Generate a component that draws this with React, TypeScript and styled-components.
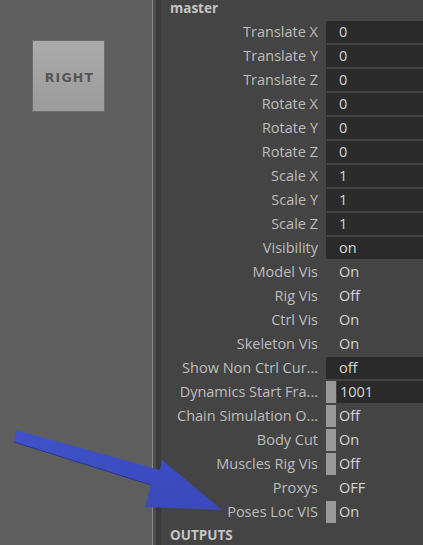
import React from 'react';
import styled, { createGlobalStyle } from 'styled-components';

const GlobalStyle = createGlobalStyle`
  html, body {
    margin: 0;
    padding: 0;
    background: #444444;
    overflow: hidden;
  }
  body {
    font-family: 'Open Sans', 'Noto Sans', sans-serif;
  }
`;

type Kind = 'field' | 'plain' | 'keyedField' | 'keyed';

type Attr = {
  label: string;
  value: string;
  kind: Kind;
};

const attributes: Attr[] = [
  { label: 'Translate X', value: '0', kind: 'field' },
  { label: 'Translate Y', value: '0', kind: 'field' },
  { label: 'Translate Z', value: '0', kind: 'field' },
  { label: 'Rotate X', value: '0', kind: 'field' },
  { label: 'Rotate Y', value: '0', kind: 'field' },
  { label: 'Rotate Z', value: '0', kind: 'field' },
  { label: 'Scale X', value: '1', kind: 'field' },
  { label: 'Scale Y', value: '1', kind: 'field' },
  { label: 'Scale Z', value: '1', kind: 'field' },
  { label: 'Visibility', value: 'on', kind: 'field' },
  { label: 'Model Vis', value: 'On', kind: 'plain' },
  { label: 'Rig Vis', value: 'Off', kind: 'plain' },
  { label: 'Ctrl Vis', value: 'On', kind: 'plain' },
  { label: 'Skeleton Vis', value: 'On', kind: 'plain' },
  { label: 'Show Non Ctrl Cur...', value: 'off', kind: 'field' },
  { label: 'Dynamics Start Fra...', value: '1001', kind: 'keyedField' },
  { label: 'Chain Simulation O...', value: 'Off', kind: 'keyed' },
  { label: 'Body Cut', value: 'On', kind: 'keyed' },
  { label: 'Muscles Rig Vis', value: 'Off', kind: 'keyed' },
  { label: 'Proxys', value: 'OFF', kind: 'plain' },
  { label: 'Poses Loc VIS', value: 'On', kind: 'keyed' },
];

const Page = styled.div`
  position: relative;
  display: flex;
  width: 423px;
  height: 545px;
  overflow: hidden;
`;

const ViewPane = styled.div`
  width: 152px;
  flex: none;
  background: #5e5e5e;
  padding: 40px 0 0 32px;
  box-sizing: border-box;
`;

const ViewCubeFace = styled.div`
  width: 73px;
  height: 72px;
  box-sizing: border-box;
  border: 1px solid #6c6c6c;
  background: linear-gradient(to bottom, #ababab, #9b9b9b);
  display: flex;
  align-items: center;
  justify-content: center;
  font-family: 'DejaVu Sans', Verdana, sans-serif;
  font-weight: bold;
  font-size: 12.5px;
  letter-spacing: 1.2px;
  color: #565656;
  padding: 2px 0 0 2px;
`;

const Splitter = styled.div`
  width: 9px;
  flex: none;
  background: linear-gradient(
    to right,
    #8a8a8a 0 1px,
    #4d4d4d 1px 4px,
    #393939 4px 9px
  );
`;

const Editor = styled.div`
  flex: 1;
  background: #444444;
  display: flex;
  flex-direction: column;
`;

const SectionTitle = styled.div<{ $height: number; $line: number }>`
  flex: none;
  height: ${({ $height }) => $height}px;
  line-height: ${({ $line }) => $line}px;
  padding-left: 9px;
  font-size: 13.5px;
  font-weight: bold;
  color: #c4c4c4;
`;

const AttrGrid = styled.div`
  flex: none;
  display: grid;
  grid-template-columns: 157px 1fr;
  grid-auto-rows: 24px;
  column-gap: 8px;
`;

const Label = styled.div`
  text-align: right;
  font-size: 14.5px;
  line-height: 22px;
  color: #bdbdbd;
  white-space: nowrap;
`;

const ValueCell = styled.div`
  display: flex;
  height: 22px;
  gap: 1px;
`;

const KeyStrip = styled.div`
  width: 10px;
  flex: none;
  background: #999999;
`;

const Value = styled.div<{ $filled: boolean; $pad: number }>`
  flex: 1;
  background: ${({ $filled }) => ($filled ? '#2b2b2b' : 'transparent')};
  padding-left: ${({ $pad }) => $pad}px;
  font-size: 14.5px;
  line-height: 22px;
  color: #d6d6d6;
  white-space: nowrap;
`;

const Annotation = styled.svg`
  position: absolute;
  left: 0;
  top: 0;
  pointer-events: none;
`;

const AttrValue: React.FC<{ attr: Attr }> = ({ attr }) => {
  const keyed = attr.kind === 'keyed' || attr.kind === 'keyedField';
  const filled = attr.kind === 'field' || attr.kind === 'keyedField';
  let pad = 13;
  if (attr.kind === 'keyedField') pad = 3;
  if (attr.kind === 'keyed') pad = 2;
  return (
    <ValueCell>
      {keyed && <KeyStrip />}
      <Value $filled={filled} $pad={pad}>
        {attr.value}
      </Value>
    </ValueCell>
  );
};

const App: React.FC = () => {
  return (
    <>
      <GlobalStyle />
      <Page>
        <ViewPane>
          <ViewCubeFace>RIGHT</ViewCubeFace>
        </ViewPane>
        <Splitter />
        <Editor>
          <SectionTitle $height={21} $line={17}>master</SectionTitle>
          <AttrGrid>
            {attributes.map(attr => (
              <React.Fragment key={attr.label}>
                <Label>{attr.label}</Label>
                <AttrValue attr={attr} />
              </React.Fragment>
            ))}
          </AttrGrid>
          <SectionTitle $height={24} $line={20}>OUTPUTS</SectionTitle>
        </Editor>
        <Annotation width="423" height="545" viewBox="0 0 423 545">
          <defs>
            <linearGradient id="arrowFill" x1="0" y1="0" x2="1" y2="1">
              <stop offset="0" stopColor="#3f52c9" />
              <stop offset="1" stopColor="#3a49bb" />
            </linearGradient>
          </defs>
          <polygon
            points="16,430 160,470 162,460 222,510 145,507 151,485 14,442"
            fill="url(#arrowFill)"
          />
          <line x1="14" y1="442" x2="151" y2="485" stroke="#2c368a" strokeWidth="1" />
        </Annotation>
      </Page>
    </>
  );
};

export default App;
